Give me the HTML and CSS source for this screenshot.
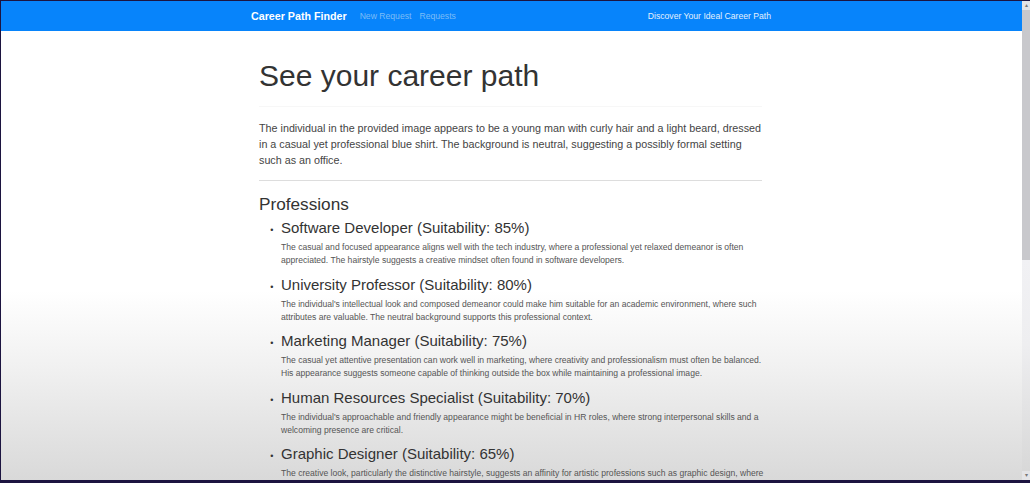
FILE: index.html
```html
<!DOCTYPE html>
<html lang="en">
<head>
    <meta charset="UTF-8">
    <meta name="viewport" content="width=device-width, initial-scale=1.0">
    <title>Career Path Finder</title>
    <link rel="stylesheet" href="styles.css">
</head>
<body>
    <div class="window">
        <div class="page">
            <nav class="navbar">
                <div class="navbar-inner">
                    <a class="brand" href="#">Career Path Finder</a>
                    <a class="nav-link" href="#">New Request</a>
                    <a class="nav-link" href="#">Requests</a>
                    <span class="tagline">Discover Your Ideal Career Path</span>
                </div>
            </nav>
            <main class="container">
                <h1>See your career path</h1>
                <hr class="rule-faint">
                <p class="lead">The individual in the provided image appears to be a young man with curly hair and a light beard, dressed in a casual yet professional blue shirt. The background is neutral, suggesting a possibly formal setting such as an office.</p>
                <hr class="rule">
                <h2>Professions</h2>
                <ul class="professions">
                    <li>
                        <h3>Software Developer (Suitability: 85%)</h3>
                        <p>The casual and focused appearance aligns well with the tech industry, where a professional yet relaxed demeanor is often appreciated. The hairstyle suggests a creative mindset often found in software developers.</p>
                    </li>
                    <li>
                        <h3>University Professor (Suitability: 80%)</h3>
                        <p>The individual's intellectual look and composed demeanor could make him suitable for an academic environment, where such attributes are valuable. The neutral background supports this professional context.</p>
                    </li>
                    <li>
                        <h3>Marketing Manager (Suitability: 75%)</h3>
                        <p>The casual yet attentive presentation can work well in marketing, where creativity and professionalism must often be balanced. His appearance suggests someone capable of thinking outside the box while maintaining a professional image.</p>
                    </li>
                    <li>
                        <h3>Human Resources Specialist (Suitability: 70%)</h3>
                        <p>The individual's approachable and friendly appearance might be beneficial in HR roles, where strong interpersonal skills and a welcoming presence are critical.</p>
                    </li>
                    <li>
                        <h3>Graphic Designer (Suitability: 65%)</h3>
                        <p>The creative look, particularly the distinctive hairstyle, suggests an affinity for artistic professions such as graphic design, where</p>
                    </li>
                </ul>
            </main>
        </div>
        <div class="scrollbar">
            <span class="arrow">&#9652;</span>
            <div class="thumb"></div>
            <div class="track"></div>
            <span class="arrow">&#9662;</span>
        </div>
    </div>
</body>
</html>
```

FILE: styles.css
```css
* {
    box-sizing: border-box;
}
html, body {
    height: 100%;
    margin: 0;
    overflow: hidden;
}
body {
    background: #1c1440;
    padding: 1px 0 3px 1px;
    font-family: "Liberation Sans", Arial, sans-serif;
    color: #333;
}
.window {
    display: flex;
    height: 100%;
    background: linear-gradient(#fff 0, #fff 290px, #f0f0f0 370px, #d9d9d9 479px);
}
.page {
    flex: 1;
    min-width: 0;
    overflow: hidden;
}
.navbar {
    background: #0784fb;
    height: 30px;
    font-size: 8.65px;
}
.navbar-inner {
    display: flex;
    align-items: center;
    height: 100%;
    width: 520px;
    margin-left: 250px;
}
.navbar a {
    text-decoration: none;
}
.brand {
    color: #fff;
    font-weight: bold;
    font-size: 10.7px;
    margin-right: 13px;
}
.nav-link {
    color: #7cbcf7;
    margin-right: 8px;
}
.tagline {
    margin-left: auto;
    color: #e3f0fd;
}
.container {
    width: 503px;
    margin-left: 258px;
    padding-top: 26px;
}
h1 {
    font-size: 30px;
    font-weight: normal;
    line-height: 37px;
    margin: 0;
}
.rule-faint {
    border: 0;
    border-top: 1px solid #f7f7f7;
    margin: 12px 0 13px;
}
.lead {
    font-size: 10.75px;
    line-height: 16px;
    margin: 0;
    color: #444;
}
.rule {
    border: 0;
    border-top: 1px solid #ddd;
    margin: 12px 0 13px;
}
h2 {
    font-size: 17.2px;
    font-weight: normal;
    line-height: 20px;
    margin: 0;
}
.professions {
    margin: 5px -6px 0 0;
    padding: 0 0 0 22px;
    list-style-type: "\2022\00a0\00a0\00a0";
}
.professions li {
    height: 56.5px;
}
.professions li::marker {
    font-size: 9px;
}
h3 {
    font-size: 15px;
    font-weight: normal;
    line-height: 18px;
    margin: 0 0 4px;
}
.professions p {
    font-size: 8.58px;
    line-height: 13px;
    margin: 0;
    color: #555;
}
.scrollbar {
    flex: none;
    width: 8px;
    display: flex;
    flex-direction: column;
    align-items: stretch;
    background: #e4e4e7;
    font-size: 6px;
    line-height: 9px;
    text-align: center;
    color: #777;
}
.thumb {
    height: 250px;
    background: #c8c8cc;
}
.track {
    flex: 1;
    background: linear-gradient(#f1f1f4, #eeeef0 40%, #d8d8d8);
}
```
